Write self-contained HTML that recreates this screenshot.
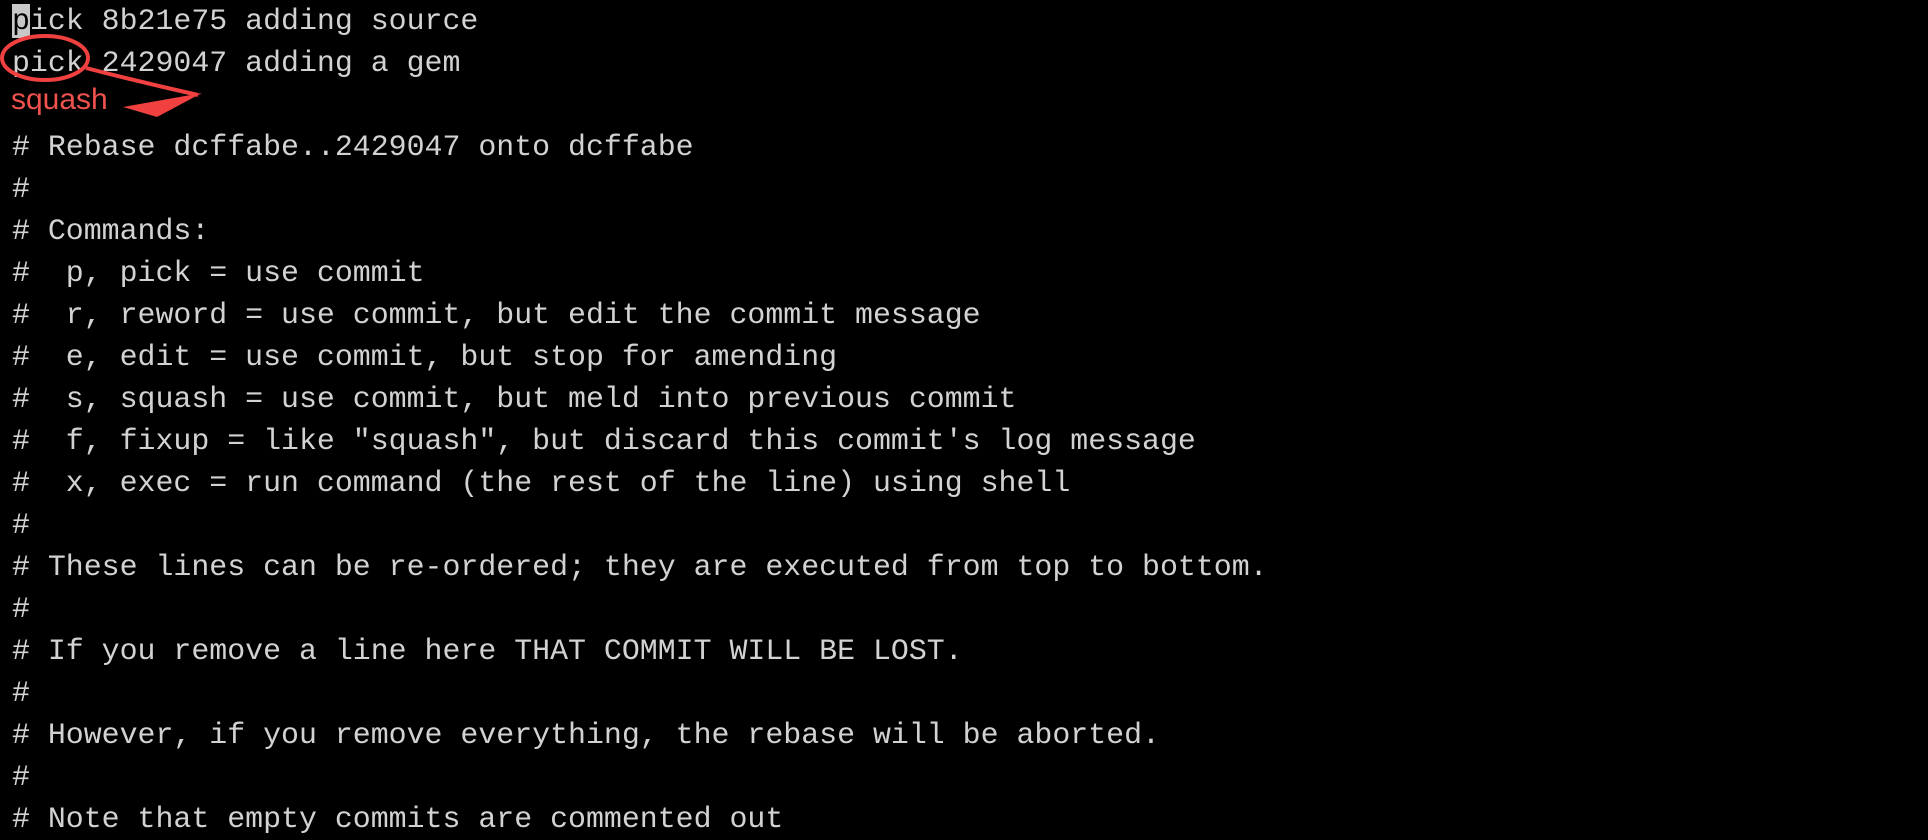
<!DOCTYPE html>
<html><head><meta charset="utf-8"><style>
html,body{margin:0;padding:0;background:#000;width:1928px;height:836px;overflow:hidden}
pre{margin:0;position:absolute;left:12px;top:0;font-family:"Liberation Mono",monospace;font-size:29.9px;line-height:42px;color:#d2d2d2}
.cur{background:#c8c8c8;color:#000}
.sq{position:absolute;left:11px;top:83px;font-family:"Liberation Sans",sans-serif;font-size:30px;color:#f0524d}
svg{position:absolute;left:0;top:0}
</style></head><body>
<pre><span class="cur">p</span>ick 8b21e75 adding source
pick 2429047 adding a gem

# Rebase dcffabe..2429047 onto dcffabe
#
# Commands:
#  p, pick = use commit
#  r, reword = use commit, but edit the commit message
#  e, edit = use commit, but stop for amending
#  s, squash = use commit, but meld into previous commit
#  f, fixup = like "squash", but discard this commit's log message
#  x, exec = run command (the rest of the line) using shell
#
# These lines can be re-ordered; they are executed from top to bottom.
#
# If you remove a line here THAT COMMIT WILL BE LOST.
#
# However, if you remove everything, the rebase will be aborted.
#
# Note that empty commits are commented out</pre>
<div class="sq">squash</div>
<svg width="260" height="140" viewBox="0 0 260 140">
<ellipse cx="45" cy="58" rx="43" ry="22" fill="none" stroke="#f04040" stroke-width="4"/>
<path d="M86 68 Q140 82 198 95" fill="none" stroke="#f04040" stroke-width="4"/>
<path d="M123 107 L202 93 L157 117 Z" fill="#f04040"/>
</svg>
</body></html>
